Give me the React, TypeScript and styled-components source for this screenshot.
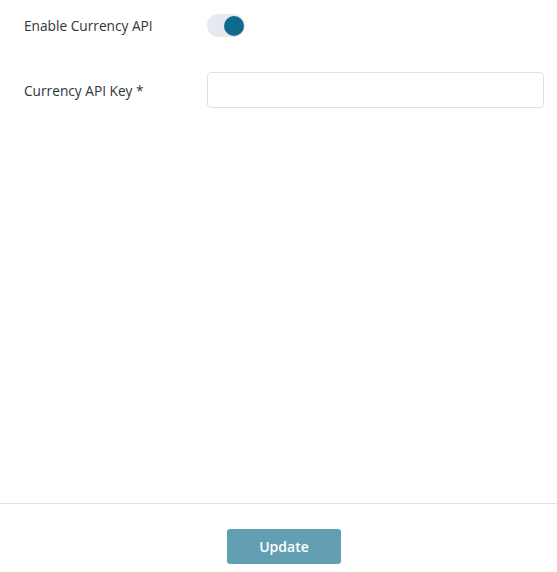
import React, { useState } from "react";
import styled, { createGlobalStyle } from "styled-components";

const Global = createGlobalStyle`
  html, body { margin: 0; padding: 0; background: #ffffff; }
  body { font-family: "Open Sans", "Noto Sans", sans-serif; color: #333a44; }
  * { box-sizing: border-box; }
`;

const Page = styled.div`
  display: flex;
  flex-direction: column;
  height: 572px;
`;

const Content = styled.div`
  flex: 1;
  display: flex;
  flex-direction: column;
  gap: 35px;
  padding: 14px 13px 0 24px;
`;

const Row = styled.div`
  display: grid;
  grid-template-columns: 183px 1fr;
  align-items: center;
`;

const Label = styled.label`
  font-size: 13.7px;
  color: #2f343b;
`;

const Track = styled.button<{ $on: boolean }>`
  width: 38px;
  height: 23px;
  border: none;
  border-radius: 12px;
  background: #e6e9ef;
  padding: 0 1px;
  display: flex;
  align-items: center;
  justify-content: ${(p) => (p.$on ? "flex-end" : "flex-start")};
  cursor: pointer;
`;

const Knob = styled.span`
  width: 20px;
  height: 20px;
  border-radius: 50%;
  background: #106a8b;
`;

const Input = styled.input`
  width: 100%;
  height: 36px;
  border: 1px solid #dde0e5;
  border-radius: 4px;
  padding: 0 10px;
  font: inherit;
  outline: none;
`;

const Footer = styled.div`
  border-top: 1px solid #e2e2e2;
  height: 69px;
  display: flex;
  justify-content: center;
  padding: 25px 0 0 11px;
`;

const Button = styled.button`
  width: 114px;
  height: 35px;
  border: none;
  border-radius: 3px;
  background: #639fb3;
  color: #ffffff;
  font-family: "Open Sans", "Noto Sans", sans-serif;
  font-size: 14px;
  font-weight: 600;
  cursor: pointer;
`;

export default function App() {
  const [on, setOn] = useState(true);
  return (
    <>
      <Global />
      <Page>
        <Content>
          <Row>
            <Label>Enable Currency API</Label>
            <Track $on={on} onClick={() => setOn(!on)}>
              <Knob />
            </Track>
          </Row>
          <Row>
            <Label>Currency API Key *</Label>
            <Input />
          </Row>
        </Content>
        <Footer>
          <Button>Update</Button>
        </Footer>
      </Page>
    </>
  );
}
